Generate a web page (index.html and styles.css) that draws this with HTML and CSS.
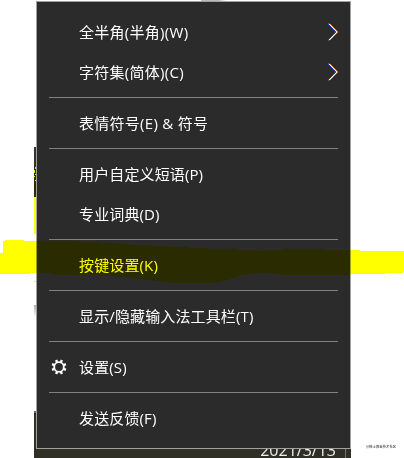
FILE: index.html
```html
<!DOCTYPE html>
<html lang="zh-CN">
<head>
    <meta charset="UTF-8">
    <title>输入法菜单</title>
    <link rel="stylesheet" href="styles.css">
</head>
<body>

<div class="screen">
    <!-- Bits of the desktop that show around the menu -->
    <div class="top-edge"></div>
    <div class="left-dark">
        <svg width="2" height="50" viewBox="0 0 2 50" shape-rendering="crispEdges">
            <path fill="#e0e000" d="M1 20h1v2H1zM0 23h1v3H0zM1 27h1v1H1zM0 29h1v1H0zM1 33h1v1H1z"/>
        </svg>
    </div>
    <div class="left-yellow"></div>
    <div class="left-gray"></div>
    <div class="left-line"></div>
    <div class="taskbar"><span class="date">2021/3/13</span></div>

    <div class="menu">
        <div class="item wide">全半角(半角)(W)
            <svg class="arrow" width="12" height="18" viewBox="0 0 12 18">
                <path d="M1 .8 L9 9 L1 17.2" stroke="#2040e0"/>
                <path d="M2.8 .8 L10.8 9 L2.8 17.2" stroke="#f09030"/>
                <path d="M1.9 .8 L9.9 9 L1.9 17.2" stroke="#fff"/>
            </svg>
        </div>
        <div class="item wide">字符集(简体)(C)
            <svg class="arrow" width="12" height="18" viewBox="0 0 12 18">
                <path d="M1 .8 L9 9 L1 17.2" stroke="#2040e0"/>
                <path d="M2.8 .8 L10.8 9 L2.8 17.2" stroke="#f09030"/>
                <path d="M1.9 .8 L9.9 9 L1.9 17.2" stroke="#fff"/>
            </svg>
        </div>
        <div class="separator"></div>
        <div class="item wide">表情符号(E) &amp; 符号</div>
        <div class="separator"></div>
        <div class="item">用户自定义短语(P)</div>
        <div class="item">专业词典(D)</div>
        <div class="separator"></div>
        <div class="item">按键设置(K)</div>
        <div class="separator"></div>
        <div class="item">显示/隐藏输入法工具栏(T)</div>
        <div class="separator"></div>
        <div class="item with-icon">
            <svg class="gear" width="16" height="16" viewBox="0 0 16 16">
                <circle cx="8" cy="8" r="4.8" fill="none" stroke="#fff" stroke-width="1.8"/>
                <g stroke="#fff" stroke-width="2.4">
                    <path d="M8 .5V3M8 13v2.5M.5 8H3M13 8h2.5" transform="rotate(22.5 8 8)"/>
                    <path d="M8 .5V3M8 13v2.5M.5 8H3M13 8h2.5" transform="rotate(67.5 8 8)"/>
                </g>
            </svg>
            设置(S)
        </div>
        <div class="separator"></div>
        <div class="item">发送反馈(F)</div>
    </div>

    <!-- Marker stroke -->
    <svg class="marker" width="404" height="56" viewBox="0 235 404 56" shape-rendering="crispEdges">
        <path fill="#ff0" d="M0 253H3V241H5V240H24V241H78V242H100V243H118V244H130V245H150V246H170V247H188V248H207V249H237V250H257V251H264V250H283V249H323V250H360V251H404V272H403V273H385V274H351V275H280V274H270V273H255V274H246V275H240V276H238V277H235V278H232V279H229V280H226V281H221V282H215V283H170V282H162V281H154V280H143V279H137V278H130V277H115V276H100V275H80V275H56V274H52V273H31V274H0Z"/>
    </svg>

    <div class="watermark">@稀土掘金技术社区</div>
</div>

</body>
</html>
```

FILE: styles.css
```css
body {
    margin: 0;
    background-color: #fff;
    font-family: "Open Sans", "Noto Sans CJK SC", sans-serif;
}
.screen {
    position: relative;
    width: 404px;
    height: 458px;
    padding: 1px 0 0 36px;
    box-sizing: border-box;
    overflow: hidden;
    background-color: #fff;
}
.menu {
    position: relative;
    width: 315px;
    height: 448px;
    padding: 11px 12px 9px;
    box-sizing: border-box;
    border: 1px solid #a0a0a0;
    background-color: #2b2b2b;
    color: #fff;
}
.item {
    display: flex;
    align-items: center;
    height: 40px;
    padding: 0 0 2px 30px;
    box-sizing: border-box;
    font-size: 15px;
    line-height: 38px;
    letter-spacing: 0.13px;
    white-space: nowrap;
}
.wide {
    letter-spacing: 0.28px;
}
.with-icon {
    padding-left: 2px;
}
.gear {
    margin-right: 12px;
}
.arrow {
    margin-left: auto;
    margin-right: -1px;
    fill: none;
}
.separator {
    height: 1px;
    margin: 4px 0 6px;
    background-color: #808080;
}
.marker {
    position: absolute;
    left: 0;
    top: 235px;
    mix-blend-mode: multiply;
}
.top-edge {
    position: absolute;
    left: 201px;
    top: 0;
    width: 25px;
    height: 1px;
    background: linear-gradient(90deg, #bbb 70%, #fff);
}
.left-dark {
    position: absolute;
    left: 34px;
    top: 147px;
    width: 2px;
    height: 50px;
    background: linear-gradient(#33332b 40%, #2c2c00 40%);
}
.left-yellow {
    position: absolute;
    left: 34px;
    top: 197px;
    width: 2px;
    height: 37px;
    background-color: #ff0;
}
.left-gray {
    position: absolute;
    left: 34px;
    top: 305px;
    width: 2px;
    height: 12px;
    background: linear-gradient(#aaa, #fff);
}
.left-line {
    position: absolute;
    left: 34px;
    top: 281px;
    width: 2px;
    height: 1px;
    background-color: #ddd;
}
.taskbar {
    position: absolute;
    left: 34px;
    top: 411px;
    width: 317px;
    height: 47px;
    box-sizing: border-box;
    border-top: 2px solid #66685c;
    background-color: #302f26;
}
.taskbar::after {
    content: "";
    position: absolute;
    right: 5px;
    bottom: 0;
    width: 1px;
    height: 9px;
    background-color: #77776f;
}
.date {
    position: absolute;
    right: 15px;
    bottom: -2px;
    font-size: 16px;
    line-height: 20px;
    color: #eee;
}
.watermark {
    position: absolute;
    left: 366px;
    top: 444px;
    font-size: 3.4px;
    line-height: 6px;
    color: #333;
    white-space: nowrap;
}
```
